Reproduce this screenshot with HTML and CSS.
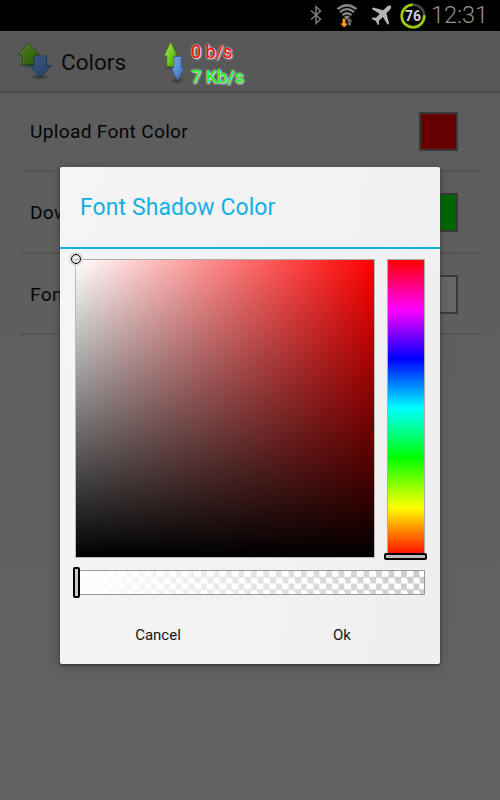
FILE: index.html
```html
<!DOCTYPE html>
<html lang="en">
<head>
<meta charset="utf-8">
<title>Colors</title>
<link rel="stylesheet" href="styles.css">
</head>
<body>
<svg width="0" height="0" class="defs">
  <defs>
    <linearGradient id="up" x1="0" y1="0" x2="1" y2="1"><stop offset="0" stop-color="#a6e05a"/><stop offset=".55" stop-color="#6fc51c"/><stop offset="1" stop-color="#4b9a08"/></linearGradient>
    <linearGradient id="down" x1="0" y1="0" x2="1" y2="1"><stop offset="0" stop-color="#6a9bd8"/><stop offset=".5" stop-color="#5a8fd2"/><stop offset="1" stop-color="#3567ab"/></linearGradient>
    <radialGradient id="shade"><stop offset="0" stop-color="#000" stop-opacity=".4"/><stop offset="1" stop-color="#000" stop-opacity="0"/></radialGradient>
    <symbol id="arrows" viewBox="0 0 36 38" preserveAspectRatio="none">
      <ellipse cx="12" cy="23" rx="11" ry="3" fill="url(#shade)"/>
      <ellipse cx="23" cy="35" rx="12" ry="3" fill="url(#shade)"/>
      <path d="M11.5 1 L22.5 13 H17.5 V22.5 H5.5 V13 H.7 Z" fill="url(#up)" stroke="#3d8700" stroke-width=".8"/>
      <path d="M17.5 14 H29.5 V23.500 H34.500 L23.500 35 L12.500 23.500 H17.500 Z" fill="url(#down)" stroke="#2a5695" stroke-width=".8"/>
      <path d="M11.500 2.500 L2.500 12.200 H6.500 V21.500" fill="none" stroke="#c6f08f" stroke-opacity=".6" stroke-width=".7"/>
      <path d="M18.500 24 V15 H28.500" fill="none" stroke="#bdd5f5" stroke-opacity=".6" stroke-width=".7"/>
    </symbol>
  </defs>
</svg>
<div class="screen">
  <header class="status">
    <svg class="bt" width="12" height="20" viewBox="0 0 12 20"><path d="M1 5.500 L10.500 14 L6 18.300 V1.700 L10.500 6 L1 14.500" fill="none" stroke="#7b7b7b" stroke-width="1.500"/></svg>
    <svg class="wifi" width="22" height="24" viewBox="0 0 22 24">
      <g fill="none" stroke="#858585" stroke-width="2.300"><path d="M1.500 5.200 Q11 -2.800 20.500 5.200"/><path d="M4 8.200 Q11 2 18 8.200"/><path d="M6.500 11.200 Q11 7.200 15.500 11.200"/></g>
      <path d="M8 12.800 Q11 10.500 14 12.800 L11 16 Z" fill="#858585"/>
      <path d="M6.500 14.500 H9.500 V19.500 H12 L8.200 23.500 L4.300 19.500 H6.500 Z" fill="#f7981d"/>
      <path d="M12.200 21.500 V17.500 H10.400 L13.500 14 L16.800 17.500 H15 V21.500 Z" fill="#666"/>
    </svg>
    <svg class="plane" width="21" height="21" viewBox="0 0 21 21"><path d="M19.700 .8 C18.500 -.1 16.700 .9 15.300 2.300 L12.300 5.200 L2.300 2.500 L.8 4 L8.700 8.800 L5 12.800 L1.800 12.500 L.5 13.700 L4.800 15.900 L6.900 20.200 L8.100 18.900 L7.900 15.700 L11.900 12 L16.600 19.800 L18.100 18.300 L15.400 8.300 L18.400 5.300 C19.800 3.900 20.700 2 19.700 .8 Z" fill="#b4b4b4"/></svg>
    <svg class="battery" width="26" height="26" viewBox="0 0 26 26">
      <circle cx="13" cy="13" r="11.300" fill="none" stroke="#444" stroke-width="2.600"/>
      <circle cx="13" cy="13" r="11.300" fill="none" stroke="#99cc00" stroke-width="2.600" pathLength="100" stroke-dasharray="76 24" transform="rotate(-4 13 13)"/>
      <text x="13" y="17.900" text-anchor="middle" class="level">76</text>
    </svg>
    <span class="clock">12:31</span>
  </header>
  <div class="bar">
    <svg class="logo" width="36" height="38"><use href="#arrows"/></svg>
    <h1>Colors</h1>
    <svg class="net" width="21" height="43"><use href="#arrows"/></svg>
    <div class="rates"><span class="tx">0 b/s</span><span class="rx">7 Kb/s</span></div>
  </div>
  <ul class="prefs">
    <li><span>Upload Font Color</span><i class="swatch red"></i></li>
    <li><span>Download Font Color</span><i class="swatch green"></i></li>
    <li><span>Font Shadow Color</span><i class="swatch clear"></i></li>
  </ul>
</div>
<section class="dialog">
  <h2><span>Font Shadow Color</span></h2>
  <div class="pickers">
    <div class="satval"><i class="ring"></i></div>
    <div class="hue"><i class="slot"></i></div>
  </div>
  <div class="alpha"><i class="grip"></i></div>
  <div class="actions"><button>Cancel</button><button>Ok</button></div>
</section>
</body>
</html>
```
FILE: styles.css
```css
* { box-sizing: border-box; margin: 0; padding: 0; }
body { width: 500px; height: 800px; overflow: hidden; position: relative; font-family: Roboto, "Liberation Sans", sans-serif; background: #5e5e5e; }
.defs { position: absolute; }
.screen { height: 800px; background: linear-gradient(#5c5c5c, #5f5f5f 45%, #616161); }
.status { height: 31px; background: #000; display: flex; align-items: flex-start; padding-left: 310px; }
.status svg { flex: none; }
.bt { margin-top: 5px; }
.wifi { margin: 4px 0 0 14px; }
.plane { margin: 5px 0 0 13px; }
.battery { margin: 3px 0 0 8px; }
.level { font-size: 14px; font-weight: 700; fill: #d0d0d0; }
.clock { color: #929292; font-size: 23.500px; font-weight: 300; line-height: 30px; margin-left: 5px; }
.bar { height: 61px; display: flex; align-items: flex-start; background: #585858; border-bottom: 1px solid #484848; box-shadow: 0 1px 2px #505050; padding-left: 17px; }
.bar svg { flex: none; }
.logo { margin-top: 11px; filter: brightness(.54); }
h1 { font-size: 22.500px; font-weight: 400; color: #0b0b0b; line-height: 62px; margin-left: 8px; width: 103px; }
.net { margin-top: 10px; }
.rates { display: flex; flex-direction: column; margin: 9px 0 0 6px; font-size: 18px; line-height: 24.500px; text-shadow: 0 0 2px #fff, 1px 1px 2px #fff; white-space: nowrap; }
.rates span { align-self: flex-start; }
.tx { color: #f00; }
.rx { color: #0f0; }
.prefs { list-style: none; padding: 0 20px; margin-top: -1px; }
.prefs li { height: 81.300px; border-bottom: 2px solid #545454; display: flex; align-items: center; justify-content: space-between; padding: 2px 22px 0 10px; color: #050505; font-size: 19.200px; letter-spacing: .28px; }
.swatch { width: 39px; height: 39px; border: 2px solid #393939; }
.red { background: #600; }
.green { background: #060; }
.clear { background: #666; }
.dialog { position: absolute; left: 60px; top: 167px; width: 380px; height: 497px; border-radius: 2px; background: linear-gradient(100deg, #f5f5f5, #efefef); box-shadow: 0 1px 2px #333, 0 2px 8px #3338; }
h2 { height: 82px; border-bottom: 2px solid #12b0e3; color: #12b0e3; font-size: 23px; font-weight: 400; line-height: 82px; padding-left: 20px; letter-spacing: .08px; }
.pickers { display: flex; gap: 12px; padding: 10px 15px 0; }
.satval { width: 300px; height: 299px; border: 1px solid #bbb; border-top-color: #aaa; background: linear-gradient(to top, #000, transparent), linear-gradient(to right, #fff, #f00); position: relative; }
.hue { width: 38px; height: 299px; border: 1px solid #aaa; background: linear-gradient(#f00, #f0f 16.667%, #00f 33.333%, #0ff 50%, #0f0 66.667%, #ff0 83.333%, #f00); position: relative; }
.ring { position: absolute; left: -5px; top: -6px; width: 10px; height: 10px; border: 1.500px solid #000; border-radius: 50%; box-shadow: 0 0 0 2px #d8d8d8, inset 0 0 0 1px #ddd; }
.slot { position: absolute; left: -4px; bottom: -3px; width: 43px; height: 7px; border: 2px solid #000; border-radius: 2px; background: #bbb; }
.alpha { position: relative; margin: 12px 0 0 15px; width: 350px; height: 25px; border: 1px solid #999; background: linear-gradient(to right, #fff, #fff0), repeating-conic-gradient(#fff 0 25%, #cbcbcb 0 50%) 0 0 / 12.500px 12.500px; }
.grip { position: absolute; left: -3px; top: -4px; width: 7px; height: 31px; border: 2px solid #000; border-radius: 2px; background: #ccc; }
.actions { display: flex; margin-top: 10px; padding: 0 6px; }
button { flex: 1; height: 60px; border: 0; background: none; font: 15px Roboto, sans-serif; color: #151515; }
```
